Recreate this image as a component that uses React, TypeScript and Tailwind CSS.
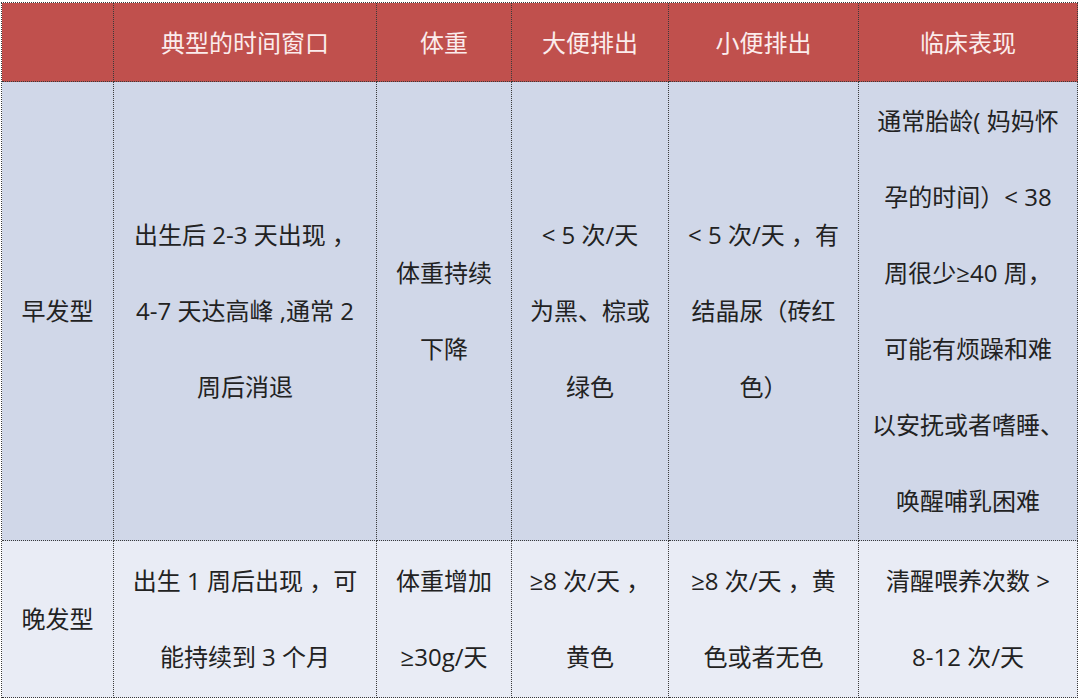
import React from "react";

const font = { fontFamily: '"Open Sans", "Noto Sans CJK SC", sans-serif' };

function Cell({ lines, cls }: { lines: string[]; cls: string }) {
  return (
    <div className={`flex flex-col items-center justify-center border-r border-b border-dotted border-[#3a3a3a] text-center ${cls}`}>
      {lines.map((l, i) => (
        <div key={i} className="whitespace-pre leading-[76px]">
          {l}
        </div>
      ))}
    </div>
  );
}

export default function App() {
  const head = "bg-[#c0504d] text-[#fbecec] pt-[2px]";
  const r1 = "bg-[#d0d7e8] text-[#222222]";
  const r2 = "bg-[#e9ecf5] text-[#222222]";
  return (
    <div className="w-[1080px] h-[700px] bg-white pt-[2px] pl-[1px]" style={font}>
      <div className="grid grid-cols-[112px_263px_135px_157px_190px_219px] grid-rows-[79px_459px_157px] border-l border-t border-dotted border-[#3a3a3a] text-[24px] w-max">
        <Cell cls={head} lines={[""]} />
        <Cell cls={head} lines={["典型的时间窗口"]} />
        <Cell cls={head} lines={["体重"]} />
        <Cell cls={head} lines={["大便排出"]} />
        <Cell cls={head} lines={["小便排出"]} />
        <Cell cls={head} lines={["临床表现"]} />

        <Cell cls={r1} lines={["早发型"]} />
        <Cell cls={r1} lines={["出生后 2-3 天出现 ，", "4-7 天达高峰 ,通常 2", "周后消退"]} />
        <Cell cls={r1} lines={["体重持续", "下降"]} />
        <Cell cls={r1} lines={["< 5 次/天", "为黑、棕或", "绿色"]} />
        <Cell cls={r1} lines={["< 5 次/天 ，有", "结晶尿（砖红", "色）"]} />
        <Cell
          cls={r1}
          lines={["通常胎龄( 妈妈怀", "孕的时间）< 38", "周很少≥40 周，", "可能有烦躁和难", "以安抚或者嗜睡、", "唤醒哺乳困难"]}
        />

        <Cell cls={r2} lines={["晚发型"]} />
        <Cell cls={r2} lines={["出生 1 周后出现 ，可", "能持续到 3 个月"]} />
        <Cell cls={r2} lines={["体重增加", "≥30g/天"]} />
        <Cell cls={r2} lines={["≥8 次/天 ，", "黄色"]} />
        <Cell cls={r2} lines={["≥8 次/天 ，黄", "色或者无色"]} />
        <Cell cls={r2} lines={["清醒喂养次数 >", "8-12 次/天"]} />
      </div>
    </div>
  );
}
